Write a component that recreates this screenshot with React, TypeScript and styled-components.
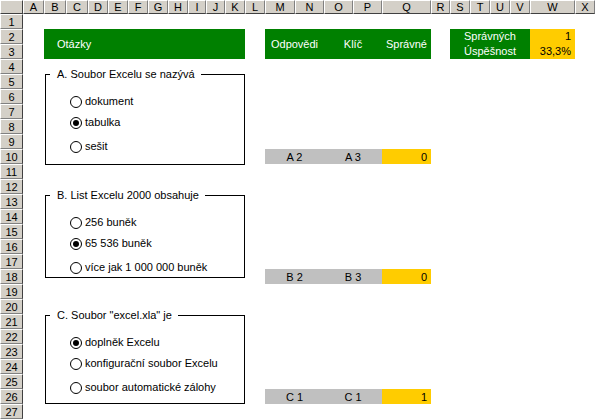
import React from 'react'
import styled, { createGlobalStyle } from 'styled-components'

const GlobalStyle = createGlobalStyle`
  html, body {
    margin: 0;
    padding: 0;
    background: #ffffff;
    overflow: hidden;
  }
  body {
    font-family: 'Liberation Sans', Arial, sans-serif;
    font-size: 11px;
    color: #000;
  }
`

const columns = ['A', 'B', 'C', 'D', 'E', 'F', 'G', 'H', 'I', 'J', 'K', 'L', 'M', 'N', 'O', 'P', 'Q', 'R', 'S', 'T', 'U', 'V', 'W', 'X']
const columnWidths = [21, 22, 22, 20, 20, 20, 20, 20, 18, 19, 20, 20, 30, 29, 29, 29, 49, 19, 20, 20, 20, 20, 45, 20]
const ROWS = 27

// grid line helpers: column letter -> grid track, sheet row -> grid track
const col = (letter: string) => columns.indexOf(letter) + 2
const span = (from: string, to: string) => `${col(from)} / ${col(to) + 1}`
const rows = (from: number, to: number) => `${from + 1} / ${to + 2}`

const Sheet = styled.div`
  display: grid;
  grid-template-columns: 23px ${columnWidths.map((w) => w + 'px').join(' ')};
  grid-template-rows: 14px repeat(${ROWS}, 15px);
  width: 595px;
  height: 419px;
  background: #ffffff;
`

const HeaderBase = styled.div`
  box-sizing: border-box;
  background: #d4d0c8;
  border-top: 1px solid #ffffff;
  border-left: 1px solid #ffffff;
  border-right: 1px solid #808080;
  border-bottom: 1px solid #808080;
  display: flex;
  align-items: center;
  justify-content: center;
  font-size: 11px;
  line-height: 12px;
  color: #000;
`

const Corner = styled(HeaderBase)`
  grid-column: 1;
  grid-row: 1;
  border-right-color: #404040;
  border-bottom-color: #404040;
`

const ColHeader = styled(HeaderBase)<{ $col: number }>`
  grid-column: ${(p) => p.$col};
  grid-row: 1;
  border-bottom-color: #404040;
`

const RowHeader = styled(HeaderBase)<{ $row: number }>`
  grid-column: 1;
  grid-row: ${(p) => p.$row};
  border-right-color: #404040;
`

type Tone = 'green' | 'gray' | 'yellow'

const tones: Record<Tone, { bg: string; fg: string }> = {
  green: { bg: '#008000', fg: '#ffffff' },
  gray: { bg: '#c0c0c0', fg: '#000000' },
  yellow: { bg: '#ffcc00', fg: '#000000' },
}

const Cell = styled.div<{ $col: string; $row: string; $tone: Tone; $align?: 'left' | 'center' | 'right' }>`
  grid-column: ${(p) => p.$col};
  grid-row: ${(p) => p.$row};
  background: ${(p) => tones[p.$tone].bg};
  color: ${(p) => tones[p.$tone].fg};
  display: flex;
  align-items: center;
  justify-content: ${(p) => (p.$align === 'left' ? 'flex-start' : p.$align === 'right' ? 'flex-end' : 'center')};
  padding: 0 ${(p) => (p.$align === 'right' ? '4px' : '0')} 0 ${(p) => (p.$align === 'left' ? '13px' : '0')};
  font-size: 11px;
  line-height: 13px;
  white-space: nowrap;
`

const ResultCell = styled(Cell)`
  align-items: flex-end;
  padding-bottom: 0;
`

const QuestionArea = styled.div<{ $row: string; $top: number; $bottom: number }>`
  grid-column: ${span('B', 'K')};
  grid-row: ${(p) => p.$row};
  display: flex;
  flex-direction: column;
  padding-top: ${(p) => p.$top}px;
  padding-bottom: ${(p) => p.$bottom}px;
  padding-right: 0;
  margin-left: 1px;
`

const GroupBox = styled.fieldset`
  flex: 1;
  margin: 0;
  padding: 14px 0 0 0;
  min-width: 0;
  border: 1px solid #000000;
`

const Caption = styled.legend`
  margin-left: 4px;
  padding: 0 6px 0 7px;
  font-size: 11px;
  line-height: 13px;
  color: #000;
`

const Options = styled.div`
  display: flex;
  flex-direction: column;
  gap: 8px;
  padding-left: 24px;
`

const Option = styled.label`
  display: flex;
  align-items: center;
  gap: 3px;
  height: 13px;
  font-size: 11px;
  line-height: 13px;
  white-space: nowrap;
  &:last-child {
    margin-top: 3px;
  }
`

const RadioMark = styled.span<{ $checked: boolean }>`
  box-sizing: border-box;
  width: 12px;
  height: 12px;
  border: 1px solid #000000;
  border-radius: 50%;
  background: #ffffff;
  display: flex;
  align-items: center;
  justify-content: center;
  flex-shrink: 0;
  &::after {
    content: '';
    width: 6px;
    height: 6px;
    border-radius: 50%;
    background: #000000;
    display: ${(p) => (p.$checked ? 'block' : 'none')};
  }
`

type Question = {
  title: string
  options: string[]
  selected: number
  answer: string
  key: string
  correct: number
  rows: [number, number]
  top: number
  bottom: number
}

const questions: Question[] = [
  {
    title: 'A. Soubor Excelu se nazývá',
    options: ['dokument', 'tabulka', 'sešit'],
    selected: 1,
    answer: 'A 2',
    key: 'A 3',
    correct: 0,
    rows: [4, 11],
    top: 9,
    bottom: 14,
  },
  {
    title: 'B. List Excelu 2000 obsahuje',
    options: ['256 buněk', '65 536 buněk', 'více jak 1 000 000 buněk'],
    selected: 1,
    answer: 'B 2',
    key: 'B 3',
    correct: 0,
    rows: [12, 19],
    top: 10,
    bottom: 21,
  },
  {
    title: 'C. Soubor "excel.xla" je',
    options: ['doplněk Excelu', 'konfigurační soubor Excelu', 'soubor automatické zálohy'],
    selected: 0,
    answer: 'C 1',
    key: 'C 1',
    correct: 1,
    rows: [20, 27],
    top: 10,
    bottom: 15,
  },
]

const resultRows = [10, 18, 26]

const App: React.FC = () => {
  const total = questions.reduce((sum, q) => sum + q.correct, 0)
  const rate = ((total / questions.length) * 100).toFixed(1).replace('.', ',') + '%'

  return (
    <>
      <GlobalStyle />
      <Sheet>
        <Corner />
        {columns.map((c, i) => (
          <ColHeader key={c} $col={i + 2}>
            {c}
          </ColHeader>
        ))}
        {Array.from({ length: ROWS }, (_, i) => (
          <RowHeader key={i} $row={i + 2}>
            {i + 1}
          </RowHeader>
        ))}

        <Cell $col={span('B', 'K')} $row={rows(2, 3)} $tone="green" $align="left">
          Otázky
        </Cell>
        <Cell $col={span('M', 'N')} $row={rows(2, 3)} $tone="green">
          Odpovědi
        </Cell>
        <Cell $col={span('O', 'P')} $row={rows(2, 3)} $tone="green">
          Klíč
        </Cell>
        <Cell $col={span('Q', 'Q')} $row={rows(2, 3)} $tone="green">
          Správné
        </Cell>

        <Cell $col={span('S', 'V')} $row={rows(2, 2)} $tone="green">
          Správných
        </Cell>
        <Cell $col={span('S', 'V')} $row={rows(3, 3)} $tone="green">
          Úspěšnost
        </Cell>
        <Cell $col={span('W', 'W')} $row={rows(2, 2)} $tone="yellow" $align="right">
          {total}
        </Cell>
        <Cell $col={span('W', 'W')} $row={rows(3, 3)} $tone="yellow" $align="right">
          {rate}
        </Cell>

        {questions.map((q, i) => (
          <React.Fragment key={q.title}>
            <QuestionArea $row={rows(q.rows[0], q.rows[1])} $top={q.top} $bottom={q.bottom}>
              <GroupBox>
                <Caption>{q.title}</Caption>
                <Options>
                  {q.options.map((o, j) => (
                    <Option key={o}>
                      <RadioMark $checked={j === q.selected} />
                      {o}
                    </Option>
                  ))}
                </Options>
              </GroupBox>
            </QuestionArea>
            <ResultCell $col={span('M', 'N')} $row={rows(resultRows[i], resultRows[i])} $tone="gray">
              {q.answer}
            </ResultCell>
            <ResultCell $col={span('O', 'P')} $row={rows(resultRows[i], resultRows[i])} $tone="gray">
              {q.key}
            </ResultCell>
            <ResultCell $col={span('Q', 'Q')} $row={rows(resultRows[i], resultRows[i])} $tone="yellow" $align="right">
              {q.correct}
            </ResultCell>
          </React.Fragment>
        ))}
      </Sheet>
    </>
  )
}

export default App
